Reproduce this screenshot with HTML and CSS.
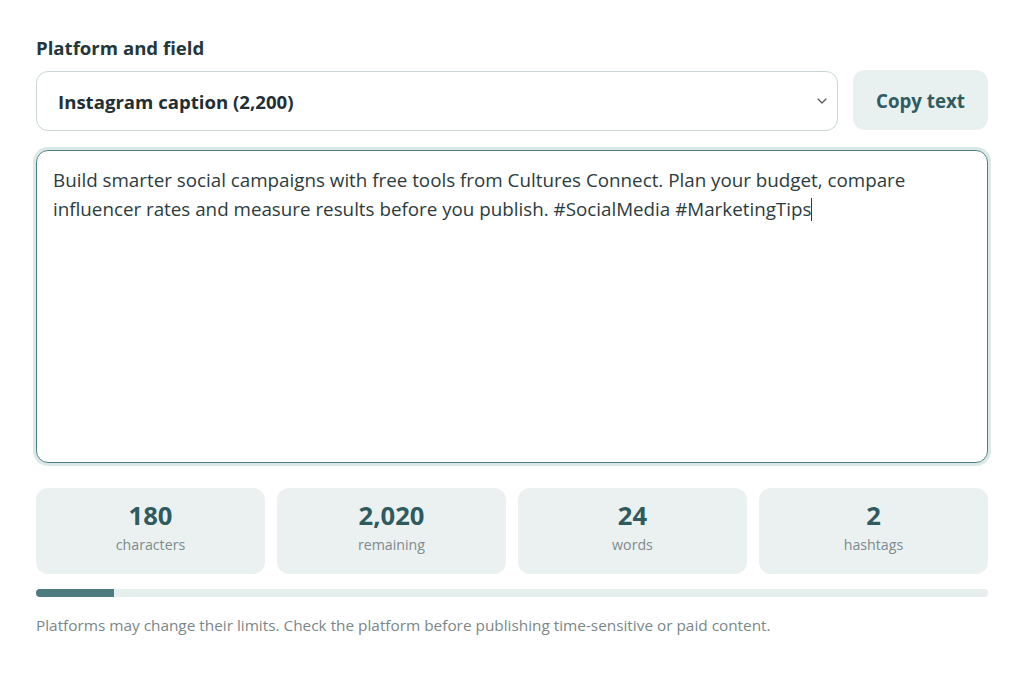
FILE: index.html
```html
<!DOCTYPE html>
<html lang="en">
<head>
<meta charset="utf-8">
<title>Character counter</title>
<link rel="stylesheet" href="styles.css">
</head>
<body>
<main class="tool">
  <label class="field-label" for="platform">Platform and field</label>
  <div class="controls">
    <div class="select-wrap">
      <select id="platform" class="select">
        <option>Instagram caption (2,200)</option>
      </select>
      <svg class="chevron" width="10" height="6" viewBox="0 0 10 6" aria-hidden="true"><path d="M1 1l4 4 4-4" fill="none" stroke="#555" stroke-width="1.2" stroke-linecap="round" stroke-linejoin="round"/></svg>
    </div>
    <button class="copy-btn" type="button">Copy text</button>
  </div>
  <div class="text-box">Build smarter social campaigns with free tools from Cultures Connect. Plan your budget, compare influencer rates and measure results before you publish. #SocialMedia #MarketingTips<span class="caret"></span></div>
  <div class="stats">
    <div class="stat"><div class="stat-num">180</div><div class="stat-label">characters</div></div>
    <div class="stat"><div class="stat-num">2,020</div><div class="stat-label">remaining</div></div>
    <div class="stat"><div class="stat-num">24</div><div class="stat-label">words</div></div>
    <div class="stat"><div class="stat-num">2</div><div class="stat-label">hashtags</div></div>
  </div>
  <div class="progress"><div class="progress-fill" style="width:8.18%"></div></div>
  <p class="note">Platforms may change their limits. Check the platform before publishing time-sensitive or paid content.</p>
</main>
</body>
</html>
```
FILE: styles.css
```css
* { box-sizing: border-box; }
html, body { margin: 0; background: #ffffff; }
body {
  font-family: "Open Sans", "Liberation Sans", sans-serif;
  color: #22363a;
}
.tool {
  padding: 36px 36px 0 36px;
  display: flex;
  flex-direction: column;
}
.field-label {
  font-size: 18.6px;
  font-weight: 700;
  color: #24383c;
  line-height: 24px;
  margin-bottom: 11px;
}
.controls {
  display: flex;
  gap: 15px;
  align-items: stretch;
}
.select-wrap {
  position: relative;
  flex: 1;
}
.select {
  appearance: none;
  -webkit-appearance: none;
  width: 100%;
  height: 60px;
  border: 1px solid #c9d6d7;
  border-radius: 12px;
  background: #ffffff;
  padding: 0 40px 0 21px;
  font-family: "Open Sans", "Liberation Sans", sans-serif;
  font-size: 18.6px;
  font-weight: 700;
  color: #1f2f33;
}
.chevron {
  position: absolute;
  right: 11px;
  top: 27px;
}
.copy-btn {
  width: 135px;
  height: 60px;
  border: none;
  border-radius: 12px;
  background: #e9f0f0;
  font-family: "Open Sans", "Liberation Sans", sans-serif;
  font-size: 18.7px;
  font-weight: 700;
  color: #2e5c60;
  margin-top: -1px;
}
.text-box {
  margin-top: 19px;
  height: 313px;
  border: 1.5px solid #4f7f83;
  border-radius: 12px;
  box-shadow: 0 0 0 3px #dbe8e8;
  padding: 15px 16px;
  font-size: 18.8px;
  line-height: 28.8px;
  color: #2b3b3e;
}
.caret {
  display: inline-block;
  width: 1px;
  height: 23px;
  background: #2b3b3e;
  vertical-align: -5px;
}
.stats {
  margin-top: 25px;
  display: grid;
  grid-template-columns: repeat(4, 1fr);
  gap: 12px;
}
.stat {
  height: 86px;
  background: #ebf1f1;
  border-radius: 12px;
  display: flex;
  flex-direction: column;
  align-items: center;
  justify-content: center;
  padding-bottom: 7px;
}
.stat-num {
  font-size: 25.6px;
  font-weight: 700;
  color: #2f5a5e;
  line-height: 32px;
}
.stat-label {
  font-size: 14.2px;
  color: #7d8b8d;
  line-height: 20px;
  margin-top: 3px;
}
.progress {
  margin-top: 15px;
  height: 8px;
  border-radius: 999px;
  background: #e6eded;
  overflow: hidden;
}
.progress-fill {
  height: 100%;
  background: #4c7c7f;
}
.note {
  margin: 18px 0 0 0;
  font-size: 15.35px;
  line-height: 20px;
  color: #7a8789;
}
```
